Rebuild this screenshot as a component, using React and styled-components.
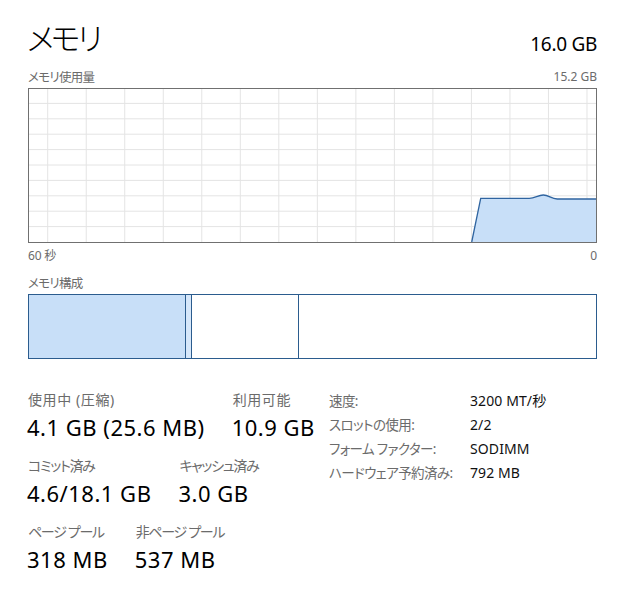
import React from "react";
import styled, { createGlobalStyle } from "styled-components";

const Global = createGlobalStyle`
  html, body { margin: 0; padding: 0; background: #ffffff; }
  body { font-family: "Noto Sans", "Noto Sans CJK JP", sans-serif; color: #000; }
`;

const Page = styled.div`
  width: 626px;
  height: 597px;
  box-sizing: border-box;
  padding: 19px 29px 0 27px;
  display: flex;
  flex-direction: column;
`;

const HeaderRow = styled.div`
  display: flex;
  justify-content: space-between;
  align-items: baseline;
`;

const Title = styled.h1`
  margin: 0;
  font-family: "Noto Sans CJK JP", sans-serif;
  font-feature-settings: "palt";
  font-weight: 300;
  font-size: 31px;
  line-height: 36px;
  letter-spacing: -3.2px;
`;

const Total = styled.div`
  font-size: 19px;
  line-height: 24px;
  letter-spacing: -0.3px;
  position: relative;
  top: 1px;
`;

const CaptionRow = styled.div`
  display: flex;
  justify-content: space-between;
  align-items: center;
  height: 18px;
  padding-left: 1px;
  margin-top: ${(p) => p.$top || 0}px;
`;

const Caption = styled.span`
  font-family: "Noto Sans", "Noto Sans CJK JP", sans-serif;
  font-feature-settings: "palt";
  font-size: ${(p) => p.$size || 12.5}px;
  color: #6b6b6b;
  letter-spacing: ${(p) => p.$ls ?? -0.7}px;
`;

const Graph = styled.div`
  margin-top: 3px;
  margin-left: 1px;
  height: 155px;
`;

const GraphSvg = styled.svg`
  display: block;
  width: 569px;
  height: 155px;
`;

const CompBar = styled.div`
  margin-top: 3px;
  margin-left: 1px;
  height: 65px;
  display: flex;
  box-sizing: border-box;
  border: 1px solid #2b5c8e;
`;

const Segment = styled.div`
  box-sizing: border-box;
  height: 100%;
  background: ${(p) => p.$fill};
  border-right: ${(p) => (p.$last ? "none" : "1px solid #2b5c8e")};
  flex: ${(p) => (p.$grow ? "1 1 auto" : "0 0 auto")};
`;

const Stats = styled.div`
  margin-top: 31px;
  display: flex;
`;

const LeftStats = styled.div`
  width: 302px;
  display: flex;
  flex-direction: column;
  gap: 10px;
`;

const StatRow = styled.div`
  display: flex;
  gap: 27px;
`;

const Stat = styled.div`
  display: flex;
  flex-direction: column;
`;

const StatLabel = styled.span`
  font-size: 14px;
  font-feature-settings: "palt";
  line-height: 19px;
  color: #6b6b6b;
  letter-spacing: ${(p) => (p.$kana ? -1.3 : 0.6)}px;
  padding-left: 1px;
  white-space: nowrap;
`;

const StatValue = styled.span`
  font-size: 22px;
  line-height: 37px;
  letter-spacing: 0.5px;
  white-space: nowrap;
`;

const Specs = styled.div`
  display: grid;
  grid-template-columns: 141px auto;
  grid-auto-rows: 24px;
  align-items: center;
  margin-top: -2px;
`;

const SpecLabel = styled.span`
  font-size: 13.5px;
  font-feature-settings: "palt";
  color: #6b6b6b;
  letter-spacing: -0.6px;
  white-space: nowrap;
`;

const SpecValue = styled.span`
  font-size: 14px;
  color: #111;
  letter-spacing: 0.1px;
  white-space: nowrap;
`;

const W = 569;
const H = 155;

function UsageGraph() {
  const vLines = Array.from({ length: 15 }, (_, i) => 19.7 + 38.52 * i);
  const hLines = Array.from({ length: 9 }, (_, i) => 15.4 * (i + 1));
  const area =
    "M443.7 154 L452.7 110.3 L501.3 110.3 C507 110.3 510 107 515.3 107 C521 107 523 111 529.3 111 L568 111 L568 154 Z";
  const line =
    "M443.7 154 L452.7 110.3 L501.3 110.3 C507 110.3 510 107 515.3 107 C521 107 523 111 529.3 111 L568 111";
  return (
    <GraphSvg viewBox={`0 0 ${W} ${H}`}>
      <rect x="0" y="0" width={W} height={H} fill="#fff" />
      {vLines.map((x) => (
        <line key={"v" + x} x1={x} x2={x} y1="0" y2={H} stroke="#e4e4e4" strokeWidth="1" />
      ))}
      {hLines.map((y) => (
        <line key={"h" + y} x1="0" x2={W} y1={y} y2={y} stroke="#e4e4e4" strokeWidth="1" />
      ))}
      <path d={area} fill="#c8dff8" />
      <path d={line} fill="none" stroke="#2f64a0" strokeWidth="1.3" />
      <rect x="0.5" y="0.5" width={W - 1} height={H - 1} fill="none" stroke="#707070" strokeWidth="1" />
    </GraphSvg>
  );
}

const segments = [
  { w: 157, fill: "#c8dff8" },
  { w: 6, fill: "#d6e7fa" },
  { w: 107, fill: "#ffffff" },
  { grow: true, fill: "#ffffff" },
];

const stats = [
  [
    { label: "使用中 (圧縮)", value: "4.1 GB (25.6 MB)" },
    { label: "利用可能", value: "10.9 GB" },
  ],
  [
    { label: "コミット済み", value: "4.6/18.1 GB", kana: true },
    { label: "キャッシュ済み", value: "3.0 GB", kana: true },
  ],
  [
    { label: "ページ プール", value: "318 MB", kana: true },
    { label: "非ページ プール", value: "537 MB", kana: true },
  ],
];

const specs = [
  ["速度:", "3200 MT/秒"],
  ["スロットの使用:", "2/2"],
  ["フォーム ファクター:", "SODIMM"],
  ["ハードウェア予約済み:", "792 MB"],
];

export default function App() {
  return (
    <>
      <Global />
      <Page>
        <HeaderRow>
          <Title>メモリ</Title>
          <Total>16.0 GB</Total>
        </HeaderRow>
        <CaptionRow $top={12}>
          <Caption>メモリ使用量</Caption>
          <Caption $size={12} $ls={0}>15.2 GB</Caption>
        </CaptionRow>
        <Graph>
          <UsageGraph />
        </Graph>
        <CaptionRow $top={3}>
          <Caption $ls={-0.2} $size={12}>60 秒</Caption>
          <Caption $size={12} $ls={0}>0</Caption>
        </CaptionRow>
        <CaptionRow $top={9}>
          <Caption>メモリ構成</Caption>
        </CaptionRow>
        <CompBar>
          {segments.map((s, i) => (
            <Segment
              key={i}
              $fill={s.fill}
              $grow={s.grow}
              $last={i === segments.length - 1}
              style={s.w ? { width: s.w } : undefined}
            />
          ))}
        </CompBar>
        <Stats>
          <LeftStats>
            {stats.map((row, r) => (
              <StatRow key={r}>
                {row.map((s) => (
                  <Stat key={s.label}>
                    <StatLabel $kana={s.kana}>{s.label}</StatLabel>
                    <StatValue>{s.value}</StatValue>
                  </Stat>
                ))}
              </StatRow>
            ))}
          </LeftStats>
          <Specs>
            {specs.map(([l, v]) => (
              <React.Fragment key={l}>
                <SpecLabel>{l}</SpecLabel>
                <SpecValue>{v}</SpecValue>
              </React.Fragment>
            ))}
          </Specs>
        </Stats>
      </Page>
    </>
  );
}
